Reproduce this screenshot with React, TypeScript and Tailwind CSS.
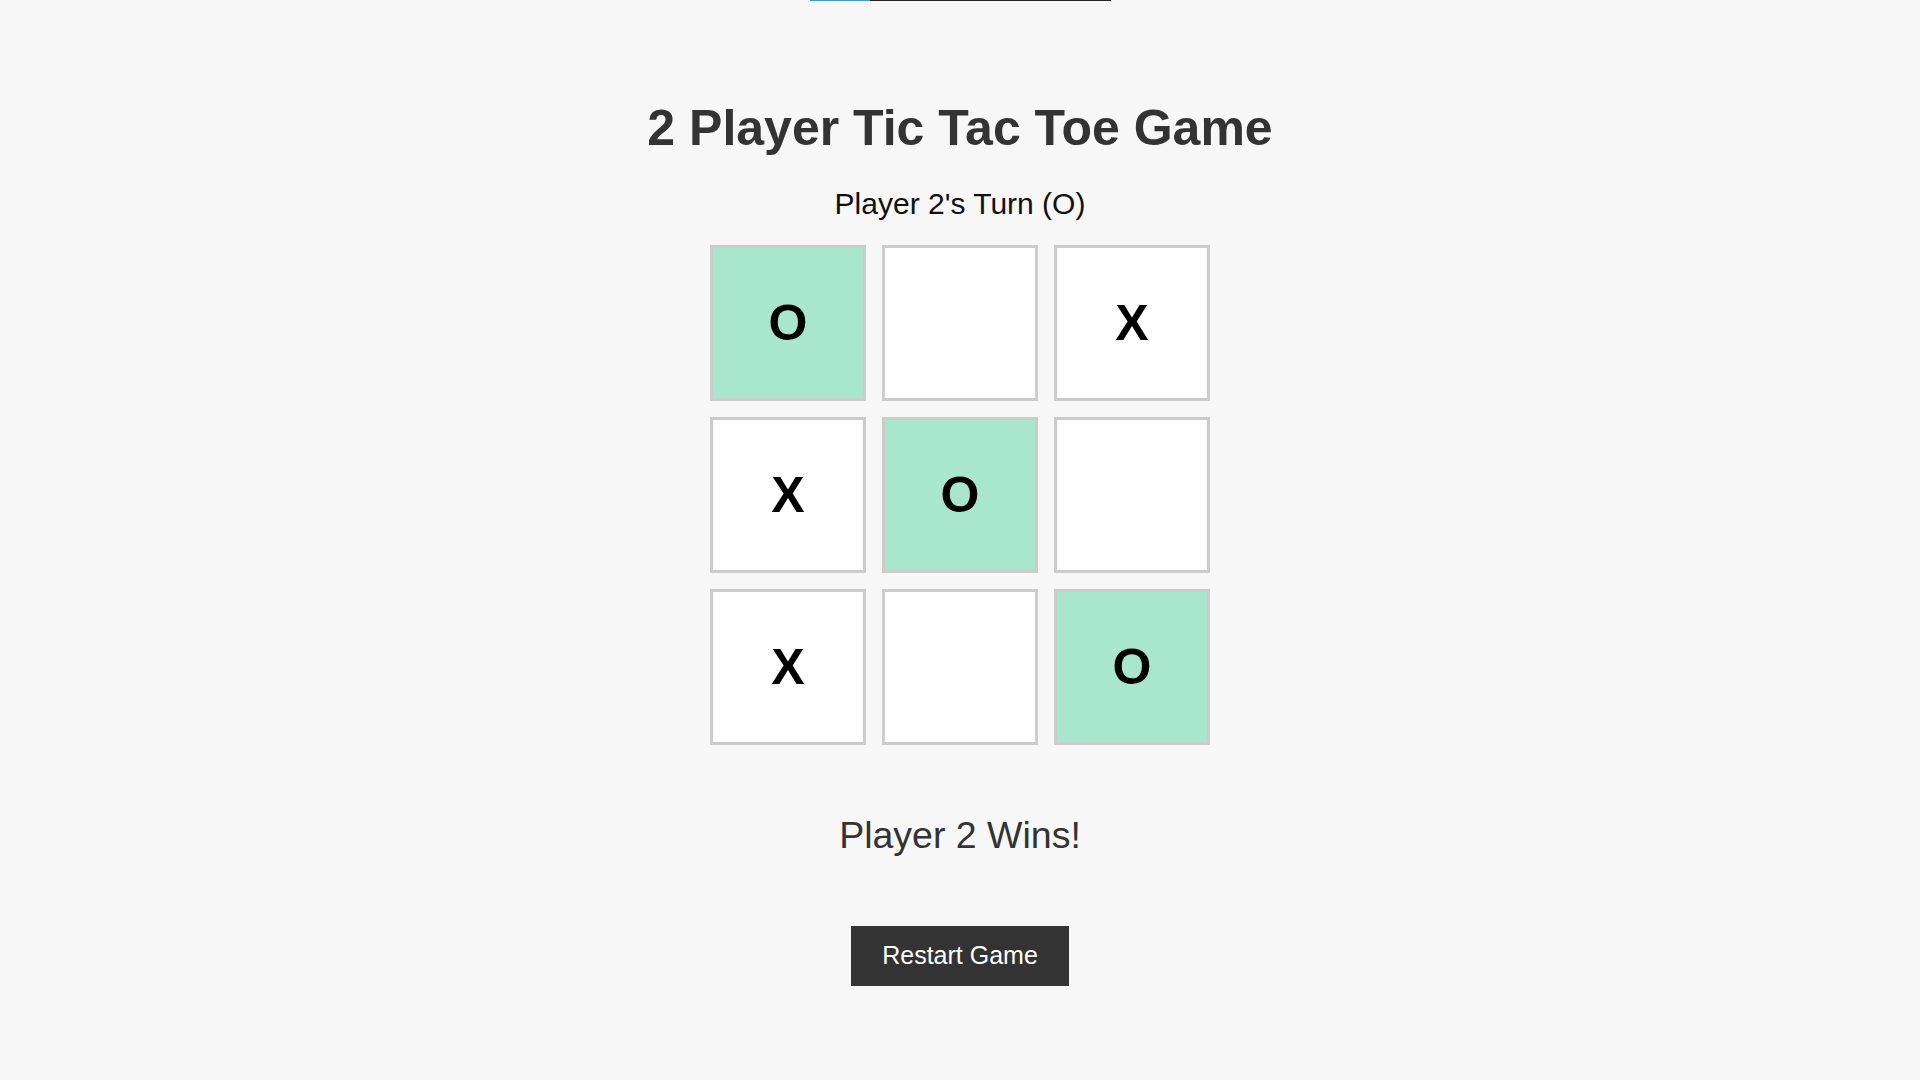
import React from "react";

const board: (string | null)[] = ["O", null, "X", "X", "O", null, "X", null, "O"];
const winning = [0, 4, 8];

export default function App() {
  return (
    <div
      className="min-h-screen w-full bg-[#f7f7f7] flex flex-col items-center"
      style={{ fontFamily: '"Liberation Sans", Arial, sans-serif' }}
    >
      <div className="flex w-[301px] h-[1px]">
        <div className="w-[60px] h-full bg-[#3a9ad9]" />
        <div className="flex-1 h-full bg-[#222222]" />
      </div>
      <h1 className="mt-[99px] text-[50px] leading-[56px] font-bold text-[#333333]">
        2 Player Tic Tac Toe Game
      </h1>
      <div className="mt-[31px] text-[30px] leading-[34px] text-[#111111]">
        Player 2's Turn (O)
      </div>
      <div className="mt-[24px] grid grid-cols-[156px_156px_156px] gap-[16px]">
        {board.map((v, i) => (
          <div
            key={i}
            className={
              "w-[156px] h-[156px] border-[3px] border-[#cccccc] flex items-center justify-center text-[50px] font-bold text-black " +
              (winning.includes(i) ? "bg-[#a8e6cf]" : "bg-white")
            }
          >
            {v}
          </div>
        ))}
      </div>
      <div className="mt-[69px] text-[37.5px] leading-[42px] text-[#333333]">
        Player 2 Wins!
      </div>
      <button className="mt-[70px] h-[60px] w-[218px] bg-[#333333] text-white text-[25px] flex items-center justify-center">
        Restart Game
      </button>
    </div>
  );
}
